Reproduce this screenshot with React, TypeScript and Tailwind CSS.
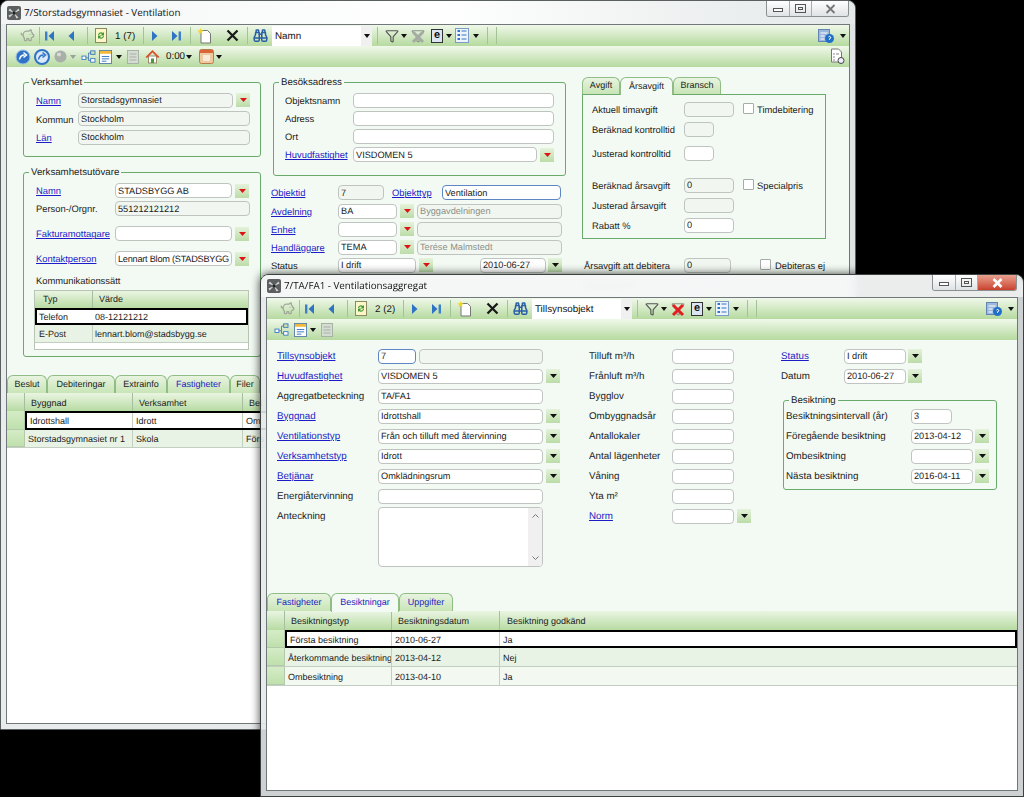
import React from "react";
import { PiggyBank, Binoculars, Funnel } from "lucide-react";

const BODY = "bg-[#f3faf3]";

// ---- icons ----
const Nav = ({ dir, bar }: { dir: "l" | "r"; bar?: boolean }) => (
  <svg width="12" height="12" viewBox="0 0 12 12">
    {dir === "l" ? (
      <>
        {bar && <rect x="1" y="1.5" width="2.4" height="9" fill="#3d7fc8" />}
        <polygon points={bar ? "10,1 4.5,6 10,11" : "9,1 3.5,6 9,11"} fill="#2f74c4" />
      </>
    ) : (
      <>
        <polygon points={bar ? "2,1 7.5,6 2,11" : "3,1 8.5,6 3,11"} fill="#2f74c4" />
        {bar && <rect x="8.6" y="1.5" width="2.4" height="9" fill="#3d7fc8" />}
      </>
    )}
  </svg>
);
const Caret = ({ c = "#111", className = "" }: { c?: string; className?: string }) => (
  <svg width="6" height="4" viewBox="0 0 6 4" className={"shrink-0 " + className}>
    <polygon points="0,0 6,0 3,4" fill={c} />
  </svg>
);
const RefreshDoc = () => (
  <svg width="14" height="15" viewBox="0 0 14 15">
    <rect x="1.5" y="0.5" width="11" height="14" fill="#fdf6c8" stroke="#8a8a60" />
    <path d="M4 7a3 3 0 0 1 5-2l1-1v3.400H6.600L8 6a2 2 0 0 0-3 1z" fill="#3f9a35" />
    <path d="M10 8a3 3 0 0 1-5 2l-1 1V7.600h3.400L6 9a2 2 0 0 0 3-1z" fill="#3f9a35" />
  </svg>
);
const NewDoc = () => (
  <svg width="15" height="16" viewBox="0 0 15 16">
    <path d="M4 2.500h6.500l3 3v9.500H4z" fill="#fff" stroke="#777" />
    <path d="M3.500 0l.9 2.200 2.300.3-1.800 1.500.6 2.300-2-1.300-2 1.300.6-2.300L.3 2.500l2.300-.3z" fill="#f4d52e" />
  </svg>
);
const BigX = () => (
  <svg width="13" height="13" viewBox="0 0 13 13">
    <path d="M1.500 1.500l10 10M11.500 1.500l-10 10" stroke="#1a1a1a" strokeWidth="2.300" />
  </svg>
);
const EBox = () => (
  <span className="flex h-[14px] w-[12px] items-center justify-center border-[1.5px] border-[#333] bg-[#dbe6f2] text-[11px] leading-none font-bold text-[#111]">e</span>
);
const ListIcon = () => (
  <svg width="14" height="15" viewBox="0 0 14 15">
    <rect x="0.500" y="0.500" width="13" height="14" fill="#eef4fb" stroke="#7c9cc4" />
    {[3, 7, 11].map((y) => (
      <g key={y}>
        <rect x="2.500" y={y - 1} width="2.500" height="2" fill="#2f74c4" />
        <rect x="6.500" y={y - 0.5} width="5" height="1" fill="#2f74c4" />
      </g>
    ))}
  </svg>
);
const HelpDoc = () => (
  <svg width="17" height="16" viewBox="0 0 17 16">
    <rect x="0.500" y="1.500" width="11" height="12" fill="#9cb8dc" stroke="#6285b4" />
    <path d="M2.500 5h7M2.500 8h4M2.500 11h4" stroke="#fff" />
    <circle cx="11.500" cy="10.500" r="4.500" fill="#1f6fc8" />
    <path d="M10.500 9a1.200 1.200 0 1 1 1 1.800v1" stroke="#fff" fill="none" />
  </svg>
);
const DocLens = () => (
  <svg width="16" height="17" viewBox="0 0 16 17">
    <path d="M1.500 1h7l3 3v10h-10z" fill="#fff" stroke="#777" />
    <path d="M3 6h2M6 6h3M3 9h2M3 12h2" stroke="#888" />
    <circle cx="11" cy="12.500" r="3" fill="#eef" stroke="#444" />
  </svg>
);
const Circ = ({ second }: { second?: boolean }) => (
  <svg width="16" height="16" viewBox="0 0 16 16">
    <circle cx="8" cy="8" r="7" fill={second ? "#dbe9f8" : "#2f74c4"} stroke={second ? "#2f74c4" : "#9cc0ea"} strokeWidth={second ? 2 : 1} />
    <path d="M4.500 10.500c.5-3 2.500-4.500 5-4.500M8.500 3.500L11.500 6l-3 2.500" stroke={second ? "#2f74c4" : "#fff"} strokeWidth="1.500" fill="none" />
  </svg>
);
const Ball = () => (
  <svg width="13" height="13" viewBox="0 0 13 13">
    <circle cx="6.500" cy="6.500" r="6" fill="#a9afa9" />
    <circle cx="5" cy="4.500" r="2" fill="#d8dcd8" />
  </svg>
);
const Net = () => (
  <svg width="15" height="13" viewBox="0 0 16 15">
    <path d="M5 9h3V3.500h3M8 9v3h3" stroke="#4a78b0" fill="none" />
    <rect x="0.500" y="7" width="4.500" height="4" fill="#fff" stroke="#2f74c4" />
    <rect x="10.500" y="1" width="5" height="4" fill="#cfe3a8" stroke="#2f74c4" />
    <rect x="10.500" y="10" width="5" height="4" fill="#fff" stroke="#2f74c4" />
  </svg>
);
const Form = () => (
  <svg width="13" height="14" viewBox="0 0 14 15">
    <rect x="0.500" y="0.500" width="13" height="14" fill="#fff" stroke="#5a7ea8" />
    <rect x="1" y="1" width="12" height="3" fill="#f0b93a" />
    <path d="M3 7h8M3 9.500h8M3 12h5" stroke="#2f74c4" />
  </svg>
);
const GrayDoc = () => (
  <svg width="12" height="14" viewBox="0 0 12 14">
    <rect x="0.500" y="0.500" width="11" height="13" fill="#d5dcd2" stroke="#a9b2a6" />
    <path d="M2.500 4h7M2.500 7h7M2.500 10h7" stroke="#a9b2a6" />
  </svg>
);
const Home = () => (
  <svg width="15" height="15" viewBox="0 0 15 15">
    <rect x="3.500" y="7" width="8" height="7" fill="#fff" stroke="#9a8a70" />
    <rect x="6" y="9.500" width="3" height="4.500" fill="#4a9a3a" />
    <path d="M0.500 8L7.500 1l7 7-1.500 1-5.500-5.500L2 9z" fill="#d8502c" />
  </svg>
);
const Cal = () => (
  <svg width="15" height="15" viewBox="0 0 15 15">
    <rect x="0.500" y="0.500" width="14" height="14" rx="2" fill="#eec9a0" stroke="#b97a4a" />
    <rect x="1" y="1" width="13" height="3" fill="#d9643a" />
    <rect x="4" y="6" width="7" height="6" fill="#f8ead8" />
  </svg>
);
const Filter = ({ c = "#555" }: { c?: string }) => <Funnel size={14} color={c} strokeWidth={2} />;
const ClearFilter = ({ red }: { red?: boolean }) => (
  <span className="relative flex">
    <Funnel size={14} color="#8c948c" strokeWidth={2} />
    <svg width="14" height="14" viewBox="0 0 14 14" className="absolute top-[1px] left-0">
      <path d="M2 2l10 10M12 2L2 12" stroke={red ? "#e02020" : "#a4aca4"} strokeWidth="3" />
    </svg>
  </span>
);

// ---- toolbar bits ----
const Sep = ({ className = "" }: { className?: string }) => <span className={"h-[17px] w-px shrink-0 bg-[#a3c295] " + className} />;
const Slot = ({ className = "", children }: { className?: string; children: React.ReactNode }) => (
  <span className={"flex h-full w-[18px] shrink-0 items-center justify-center " + className}>{children}</span>
);
const BAR = "flex h-[21px] items-center bg-gradient-to-b from-[#f0f8ea] to-[#b6da9f] text-[9.800px] text-[#111]";

const MainToolbar = ({ pos, search, red }: { pos: string; search: string; red?: boolean }) => (
  <div className={BAR}>
    <Slot className="ml-[11px]"><PiggyBank size={15} color="#a0a898" /></Slot>
    <Sep className="ml-[3px]" />
    <Slot className="ml-px"><Nav dir="l" bar /></Slot>
    <Slot className="ml-[3px]"><Nav dir="l" /></Slot>
    <Sep className="ml-[7px]" />
    <Slot className="ml-[4px]"><RefreshDoc /></Slot>
    <span className="ml-[5px] w-[20px] shrink-0 whitespace-nowrap pt-[3px]">{pos}</span>
    <Sep className="ml-[8px]" />
    <Slot className="ml-[2px]"><Nav dir="r" /></Slot>
    <Slot className="ml-[3px]"><Nav dir="r" bar /></Slot>
    <Sep className="ml-[5px]" />
    <Slot className="ml-[4px]"><NewDoc /></Slot>
    <Slot className="ml-[10px]"><BigX /></Slot>
    <Sep className="ml-[6px]" />
    <Slot className="ml-[3px]"><Binoculars size={15} color="#2a5fa8" strokeWidth={2.4} /></Slot>
    <div className="ml-[3px] flex h-[20px] w-[100px] shrink-0 items-center bg-white pl-[3px]">
      <span className="pt-[3px]">{search}</span>
      <span className="ml-auto flex h-full w-[11px] items-center justify-center bg-[#f0f0f0]"><Caret /></span>
    </div>
    <Sep className="ml-[5px]" />
    <Slot className="ml-[5px]"><Filter /></Slot>
    <Caret />
    <Slot className="ml-[2px]"><ClearFilter red={red} /></Slot>
    <Slot className="ml-px"><EBox /></Slot>
    <Caret />
    <Slot className="ml-px"><ListIcon /></Slot>
    <Caret className="ml-[2px]" />
    <Sep className="ml-[8px]" />
    <Sep className="ml-[8px]" />
    <Slot className="ml-auto"><HelpDoc /></Slot>
    <Caret className="mr-[3px] ml-[5px]" />
  </div>
);

// ---- form bits ----
const Link = ({ w, children }: { w: string; children: React.ReactNode }) => (
  <span className={"shrink-0 whitespace-nowrap pt-[2px] text-[#1c1cc8] underline " + w}>{children}</span>
);
const Lbl = ({ w, children }: { w: string; children: React.ReactNode }) => (
  <span className={"shrink-0 whitespace-nowrap pt-[2px] " + w}>{children}</span>
);
const Fld = ({ w, v, ro, focus, gray, h = "h-[15px]" }: { w: string; v?: string; ro?: boolean; focus?: boolean; gray?: boolean; h?: string }) => (
  <div
    className={
      "flex shrink-0 items-center overflow-hidden whitespace-nowrap rounded-[4px] border-[1.5px] pt-[2px] pl-[2px] text-[9.200px] " +
      `${h} ${w} ` +
      (focus ? "border-[#5f86c4] " : "border-[#c0c4c0] ") +
      (ro ? "bg-[#f1f7f0] " : "bg-white ") +
      (gray ? "text-[#8a8f8a]" : "text-[#1a1a1a]")
    }
  >
    {v}
  </div>
);
const Drop = ({ red, className = "ml-[3px]" }: { red?: boolean; className?: string }) => (
  <span className={"flex h-[14px] w-[14px] shrink-0 items-center justify-center bg-gradient-to-b from-[#e4f2da] to-[#bcdca8] " + className}>
    <svg width="7" height="4" viewBox="0 0 7 4" className="shrink-0">
      <polygon points="0,0 7,0 3.500,4" fill={red ? "#dd1414" : "#111"} />
    </svg>
  </span>
);
const Row = ({ h = "h-[18px]", className = "", children }: { h?: string; className?: string; children: React.ReactNode }) => (
  <div className={"flex items-center " + h + " " + className}>{children}</div>
);
const Group = ({ title, className, pad, children }: { title: string; className: string; pad: string; children: React.ReactNode }) => (
  <fieldset className={"rounded-[3px] border border-[#6aaa6a] " + className}>
    <legend className="ml-[5px] h-[12px] px-[2px] text-[9.700px] leading-[13px]">{title}</legend>
    <div className={pad}>{children}</div>
  </fieldset>
);
const Check = () => <span className="h-[11px] w-[11px] shrink-0 rounded-[1px] border border-[#a8aca8] bg-white" />;

const Tab = ({ w, active, blue, children }: { w: string; active?: boolean; blue?: boolean; children: React.ReactNode }) => (
  <div
    className={
      "flex shrink-0 items-center justify-center rounded-t-[6px] border border-b-0 border-[#8fbd85] text-[9px] " +
      `${w} ` +
      (active ? "relative z-10 -mb-px bg-[#f3faf3] " : "bg-gradient-to-b from-[#e8f4e0] to-[#c8e5b6] ") +
      (blue ? "text-[#2222c0]" : "text-[#222]")
    }
  >
    {children}
  </div>
);

const HCell = ({ w, children }: { w: string; children?: React.ReactNode }) => (
  <div className={"flex h-full shrink-0 items-center overflow-hidden whitespace-nowrap border-r border-[#a6bda0] bg-gradient-to-b from-[#eaf5e2] to-[#b7dba2] pt-[3px] pl-[6px] text-[9px] " + w}>{children}</div>
);
const Cell = ({ w, children }: { w: string; children?: React.ReactNode }) => (
  <div className={"flex h-full shrink-0 items-center overflow-hidden whitespace-nowrap border-r border-[#c2cfc0] pt-[3px] pl-[3px] text-[9px] " + w}>{children}</div>
);
const LastCell = ({ children }: { children: React.ReactNode }) => <div className="flex items-center pt-[3px] pl-[3px] text-[9px]">{children}</div>;
const Ind = ({ w }: { w: string }) => <div className={"h-full shrink-0 border-r border-b border-[#b4c8ac] bg-gradient-to-b from-[#d4ecc6] to-[#bfe0ac] " + w} />;

const WinIcon = () => (
  <svg width="14" height="14" viewBox="0 0 14 14" className="shrink-0">
    <rect width="14" height="14" rx="2" fill="#5c5f5f" />
    <path d="M7 7L3 2.500 1.500 4.500zM7 7l4.500-4.500 1 2zM7 7l4.500 4.500-2 1zM7 7l-4.500 4.500-1-2z" fill="#d4d8d8" />
    <circle cx="7" cy="7" r="1.500" fill="#222" />
  </svg>
);
const Controls = ({ w, red }: { w: string; red?: boolean }) => (
  <div className={"mr-[6px] ml-auto flex h-[16px] overflow-hidden rounded-b-[3px] border border-t-0 border-[#8a8f90] text-[#555] " + w}>
    <div className="flex w-[23px] items-center justify-center border-r border-[#a8acac] bg-gradient-to-b from-white to-[#dfe3e5]">
      <span className="mt-[3px] h-[4px] w-[10px] border border-[#555] bg-white" />
    </div>
    <div className="flex w-[22px] items-center justify-center border-r border-[#a8acac] bg-gradient-to-b from-white to-[#dfe3e5]">
      <span className="flex h-[9px] w-[11px] items-center justify-center border border-[#555]"><span className="h-[3px] w-[5px] border border-[#555]" /></span>
    </div>
    <div className={"flex flex-1 items-center justify-center " + (red ? "bg-gradient-to-b from-[#e8a090] to-[#c8402c]" : "bg-gradient-to-b from-white to-[#dfe3e5]")}>
      <svg width="11" height="10" viewBox="0 0 11 10">
        <path d="M1.500 1l8 8M9.500 1l-8 8" stroke={red ? "#fff" : "#777"} strokeWidth={red ? 2.600 : 1.800} />
      </svg>
    </div>
  </div>
);

// ---- first window pieces ----
const Verksamhet = () => (
  <Group title="Verksamhet" className="h-[81px] w-[238px]" pad="pt-[3px] pl-[12px]">
    <Row h="h-[18.500px]"><Link w="w-[42px]">Namn</Link><Fld w="w-[155px]" v="Storstadsgymnasiet" ro /><Drop red /></Row>
    <Row h="h-[18.500px]"><Lbl w="w-[42px]">Kommun</Lbl><Fld w="w-[172px]" v="Stockholm" ro /></Row>
    <Row h="h-[18.500px]"><Link w="w-[42px]">Län</Link><Fld w="w-[172px]" v="Stockholm" ro /></Row>
  </Group>
);

const Utovare = () => (
  <Group title="Verksamhetsutövare" className="mt-[9px] h-[191px] w-[238px]" pad="pt-[3.500px] pl-[12px]">
    <Row><Link w="w-[79px]">Namn</Link><Fld w="w-[117px]" v="STADSBYGG AB" /><Drop red /></Row>
    <Row><Lbl w="w-[79px]">Person-/Orgnr.</Lbl><Fld w="w-[135px]" v="551212121212" ro /></Row>
    <Row className="mt-[7px]"><Link w="w-[79px]">Fakturamottagare</Link><Fld w="w-[117px]" /><Drop red /></Row>
    <Row className="mt-[7px]"><Link w="w-[79px]">Kontaktperson</Link><Fld w="w-[117px] tracking-[-0.25px]" v="Lennart Blom (STADSBYGG" /><Drop red /></Row>
    <Row className="mt-[3.500px]"><Lbl w="w-[100px]">Kommunikationssätt</Lbl></Row>
    <div className="mt-px -ml-[2px] h-[60px] w-[215px] border border-[#b8c4b4] bg-white text-[9px]">
      <div className="flex h-[17px]">
        <div className="w-[58px] border-r border-[#a6bda0] bg-gradient-to-b from-[#eaf5e2] to-[#b7dba2] pl-[8px] leading-[17px]">Typ</div>
        <div className="flex-1 bg-gradient-to-b from-[#eaf5e2] to-[#b7dba2] pl-[6px] leading-[17px]">Värde</div>
      </div>
      <div className="flex h-[17px] items-center border-2 border-black bg-white pt-[2px]">
        <div className="w-[56px] pl-[2px]">Telefon</div>
        <div className="pl-[2px]">08-12121212</div>
      </div>
      <div className="flex h-[18px] items-center border-b border-[#c2cfc0] bg-[#e8f3e6]">
        <div className="h-full w-[58px] border-r border-[#c2cfc0] pl-[4px] leading-[19px]">E-Post</div>
        <div className="pt-[2px] pl-[2px]">lennart.blom@stadsbygg.se</div>
      </div>
    </div>
  </Group>
);

const Middle = () => (
  <div className="ml-[12px] w-[293px] shrink-0 pt-[9px]">
    <Group title="Besöksadress" className="h-[100px] w-[293px]" pad="pt-[3px] pl-[11px]">
      <Row><Lbl w="w-[68px]">Objektsnamn</Lbl><Fld w="w-[201px]" /></Row>
      <Row><Lbl w="w-[68px]">Adress</Lbl><Fld w="w-[201px]" /></Row>
      <Row><Lbl w="w-[68px]">Ort</Lbl><Fld w="w-[201px]" /></Row>
      <Row h="h-[19px]"><Link w="w-[68px]">Huvudfastighet</Link><Fld w="w-[184px]" v="VISDOMEN 5" /><Drop red /></Row>
    </Group>
    <div className="-ml-[2px] pt-[7px]">
      <Row h="h-[19px]"><Link w="w-[67px]">Objektid</Link><Fld w="w-[46px]" v="7" ro /><span className="w-[8px]" /><Link w="w-[50px]">Objekttyp</Link><Fld w="w-[119px]" v="Ventilation" focus /></Row>
      <Row><Link w="w-[67px]">Avdelning</Link><Fld w="w-[59px]" v="BA" /><Drop red /><Fld w="w-[145px] ml-[3px]" v="Byggavdelningen" ro gray /></Row>
      <Row><Link w="w-[67px]">Enhet</Link><Fld w="w-[59px]" /><Drop red /><Fld w="w-[145px] ml-[3px]" ro /></Row>
      <Row><Link w="w-[67px]">Handläggare</Link><Fld w="w-[59px]" v="TEMA" /><Drop red /><Fld w="w-[145px] ml-[3px]" v="Terése Malmstedt" ro gray /></Row>
      <Row><Lbl w="w-[67px]">Status</Lbl><Fld w="w-[78px]" v="I drift" /><Drop red /><Fld w="w-[66px] ml-[47px]" v="2010-06-27" /><Drop className="ml-[2px]" /></Row>
    </div>
  </div>
);

const Right = () => (
  <div className="ml-[16px] w-[244px] shrink-0 pt-[9px]">
    <div className="flex h-[18px] items-end">
      <Tab w="w-[38px] h-[17px]">Avgift</Tab>
      <Tab w="w-[53px] h-[18px]" active>Årsavgift</Tab>
      <Tab w="w-[48px] h-[17px]">Bransch</Tab>
    </div>
    <div className="h-[145px] border border-[#6aaa6a] pt-[5px] pl-[9px]">
      <Row><Lbl w="w-[92px]">Aktuell timavgift</Lbl><Fld w="w-[50px]" ro /><span className="ml-[9px] flex items-center gap-[3px]"><Check /><span className="pt-[2px]">Timdebitering</span></span></Row>
      <Row h="h-[23px]"><Lbl w="w-[92px]">Beräknad kontrolltid</Lbl><Fld w="w-[30px]" ro /></Row>
      <Row h="h-[25px]"><Lbl w="w-[92px]">Justerad kontrolltid</Lbl><Fld w="w-[30px]" /></Row>
      <Row h="h-[20px]" className="mt-[9px]"><Lbl w="w-[92px]">Beräknad årsavgift</Lbl><Fld w="w-[50px]" v="0" ro /><span className="ml-[9px] flex items-center gap-[3px]"><Check /><span className="pt-[2px]">Specialpris</span></span></Row>
      <Row h="h-[20px]"><Lbl w="w-[92px]">Justerad årsavgift</Lbl><Fld w="w-[50px]" ro /></Row>
      <Row h="h-[20px]"><Lbl w="w-[92px]">Rabatt %</Lbl><Fld w="w-[50px]" v="0" /></Row>
    </div>
    <div className="pt-[17px]">
      <Row><Lbl w="w-[100px] ml-[2px]">Årsavgift att debitera</Lbl><Fld w="w-[47px]" v="0" ro /><span className="ml-[29px] flex items-center gap-[4px]"><Check /><span className="pt-[2px]">Debiteras ej</span></span></Row>
      <Row h="h-[20px]"><Lbl w="w-[100px] ml-[2px]">Debiterad fe</Lbl><Fld w="w-[30px]" /></Row>
    </div>
  </div>
);

// ---- windows ----
const WindowOne = () => (
  <div className="absolute top-0 left-0 flex h-[730px] w-[856px] flex-col rounded-t-[8px] border border-[#5a5f60] bg-gradient-to-r from-[#e9eced] to-[#dfe3e4] text-[9.400px] shadow-[0_0_6px_rgba(0,0,0,0.5)]">
    <div className="flex h-[23px] shrink-0 items-start rounded-t-[8px] bg-gradient-to-r from-[#f2f4f4] via-white to-[#e4e8e8]">
      <div className="mt-[5px] ml-[6px]"><WinIcon /></div>
      <span className="mt-[5px] ml-[3px] font-['Open_Sans',sans-serif] text-[9.800px] text-[#111]">7/Storstadsgymnasiet - Ventilation</span>
      <Controls w="w-[83px]" />
    </div>
    <div className="mx-[5px] mb-[5px] flex min-h-0 flex-1 flex-col overflow-hidden border border-[#70787a] bg-white">
      <MainToolbar pos="1 (7)" search="Namn" />
      <div className={BAR}>
        <Slot className="ml-[7px]"><Circ /></Slot>
        <Slot className="ml-px"><Circ second /></Slot>
        <Slot><Ball /></Slot>
        <Caret c="#9aa29a" className="ml-px" />
        <Slot className="ml-[3px]"><Net /></Slot>
        <Slot className="-ml-px"><Form /></Slot>
        <Caret className="ml-[2px]" />
        <Slot className="ml-[2px]"><GrayDoc /></Slot>
        <Slot className="ml-px"><Home /></Slot>
        <span className="ml-[5px] w-[17px] shrink-0 pt-[2px]">0:00</span>
        <Caret className="ml-[3px]" />
        <Slot className="ml-[5px]"><Cal /></Slot>
        <Caret className="ml-px" />
        <Slot className="mr-[2px] ml-auto"><DocLens /></Slot>
      </div>
      <div className={"flex h-[308px] shrink-0 overflow-hidden pl-[16px] " + BODY}>
        <div className="w-[238px] shrink-0 pt-[9px]">
          <Verksamhet />
          <Utovare />
        </div>
        <Middle />
        <Right />
      </div>
      <div className={"flex h-[18px] shrink-0 items-end " + BODY}>
        <Tab w="w-[40px] h-[18px]">Beslut</Tab>
        <Tab w="w-[68px] h-[18px]">Debiteringar</Tab>
        <Tab w="w-[52px] h-[18px]">Extrainfo</Tab>
        <Tab w="w-[63px] h-[18px]" blue>Fastigheter</Tab>
        <Tab w="w-[30px] h-[18px]">Filer</Tab>
      </div>
      <div className="flex h-[18px] shrink-0">
        <HCell w="w-[18px]" />
        <HCell w="w-[108px]">Byggnad</HCell>
        <HCell w="w-[110px]">Verksamhet</HCell>
        <HCell w="w-[300px]">Bet</HCell>
      </div>
      <div className="flex h-[19px] shrink-0">
        <Ind w="w-[18px]" />
        <div className="flex flex-1 border-2 border-black">
          <Cell w="w-[106px]">Idrottshall</Cell>
          <Cell w="w-[110px]">Idrott</Cell>
          <Cell w="w-[300px]">Om</Cell>
        </div>
      </div>
      <div className="flex h-[18px] shrink-0 border-b border-[#c2cfc0] bg-[#e8f3e6]">
        <Ind w="w-[18px]" />
        <Cell w="w-[108px]">Storstadsgymnasiet nr 1</Cell>
        <Cell w="w-[110px]">Skola</Cell>
        <Cell w="w-[300px]">Förs</Cell>
      </div>
    </div>
  </div>
);

const F1 = "h-[20px]";
const LW = "w-[101px]";
const MW = "w-[83px]";

const WindowTwo = () => (
  <div className="absolute top-[274px] left-[260px] flex h-[523px] w-[764px] flex-col rounded-t-[8px] border border-[#3c4142] bg-[#e4e8e9]/90 text-[9.800px] shadow-[0_0_10px_rgba(0,0,0,0.75)]">
    <div className="flex h-[22px] shrink-0 items-start rounded-t-[8px] bg-white/60 backdrop-blur-[3px]">
      <div className="mt-[4px] ml-[6px]"><WinIcon /></div>
      <span className="mt-[4px] ml-[3px] font-['Open_Sans',sans-serif] text-[9.800px] text-[#111]">7/TA/FA1 - Ventilationsaggregat</span>
      <Controls w="w-[85px]" red />
    </div>
    <div className="mx-[5px] mb-[5px] flex min-h-0 flex-1 flex-col overflow-hidden border border-[#70787a] bg-white">
      <MainToolbar pos="2 (2)" search="Tillsynsobjekt" red />
      <div className={BAR}>
        <Slot className="ml-[5px]"><Net /></Slot>
        <Slot className="ml-px"><Form /></Slot>
        <Caret className="ml-px" />
        <Slot className="ml-[2px]"><GrayDoc /></Slot>
      </div>
      <div className={"flex h-[252px] shrink-0 pt-[6px] pl-[10px] " + BODY}>
        <div className="w-[284px] shrink-0">
          <Row h={F1}><Link w={LW}>Tillsynsobjekt</Link><Fld w="w-[38px]" v="7" focus /><Fld w="w-[124px] ml-[3px]" ro /></Row>
          <Row h={F1}><Link w={LW}>Huvudfastighet</Link><Fld w="w-[165px]" v="VISDOMEN 5" /><Drop /></Row>
          <Row h={F1}><Lbl w={LW}>Aggregatbeteckning</Lbl><Fld w="w-[165px]" v="TA/FA1" /></Row>
          <Row h={F1}><Link w={LW}>Byggnad</Link><Fld w="w-[165px]" v="Idrottshall" /><Drop /></Row>
          <Row h={F1}><Link w={LW}>Ventilationstyp</Link><Fld w="w-[165px]" v="Från och tilluft med återvinning" /><Drop /></Row>
          <Row h={F1}><Link w={LW}>Verksamhetstyp</Link><Fld w="w-[165px]" v="Idrott" /><Drop /></Row>
          <Row h={F1}><Link w={LW}>Betjänar</Link><Fld w="w-[165px]" v="Omklädningsrum" /><Drop /></Row>
          <Row h={F1}><Lbl w={LW}>Energiåtervinning</Lbl><Fld w="w-[165px]" /></Row>
          <div className="mt-px flex items-start">
            <Lbl w={LW + " leading-[16px]"}>Anteckning</Lbl>
            <div className="flex h-[60px] w-[165px] justify-end overflow-hidden rounded-[4px] border-[1.5px] border-[#c0c4c0] bg-white">
              <div className="flex w-[14px] flex-col items-center justify-between bg-[#f0f0f0] py-[6px]">
                <svg width="7" height="4" viewBox="0 0 7 4"><path d="M0.500 3.500l3-3 3 3" stroke="#777" fill="none" /></svg>
                <svg width="7" height="4" viewBox="0 0 7 4"><path d="M0.500 0.500l3 3 3-3" stroke="#777" fill="none" /></svg>
              </div>
            </div>
          </div>
        </div>
        <div className="ml-[28px] w-[192px] shrink-0">
          <Row h={F1}><Lbl w={MW}>Tilluft m³/h</Lbl><Fld w="w-[62px]" /></Row>
          <Row h={F1}><Lbl w={MW}>Frånluft m³/h</Lbl><Fld w="w-[62px]" /></Row>
          <Row h={F1}><Lbl w={MW}>Bygglov</Lbl><Fld w="w-[62px]" /></Row>
          <Row h={F1}><Lbl w={MW}>Ombyggnadsår</Lbl><Fld w="w-[62px]" /></Row>
          <Row h={F1}><Lbl w={MW}>Antallokaler</Lbl><Fld w="w-[62px]" /></Row>
          <Row h={F1}><Lbl w={MW}>Antal lägenheter</Lbl><Fld w="w-[62px]" /></Row>
          <Row h={F1}><Lbl w={MW}>Våning</Lbl><Fld w="w-[62px]" /></Row>
          <Row h={F1}><Lbl w={MW}>Yta m²</Lbl><Fld w="w-[62px]" /></Row>
          <Row h={F1}><Link w={MW}>Norm</Link><Fld w="w-[62px]" /><Drop /></Row>
        </div>
        <div className="w-[220px] shrink-0">
          <Row h={F1}><Link w="w-[63px]">Status</Link><Fld w="w-[62px]" v="I drift" /><Drop className="ml-[2px]" /></Row>
          <Row h={F1}><Lbl w="w-[63px]">Datum</Lbl><Fld w="w-[62px]" v="2010-06-27" /><Drop className="ml-[2px]" /></Row>
          <Group title="Besiktning" className="mt-[8px] ml-[2px] h-[96px] w-[214px]" pad="pl-[2px]">
            <Row h={F1}><Lbl w="w-[125px]">Besiktningsintervall (år)</Lbl><Fld w="w-[41px]" v="3" /></Row>
            <Row h={F1}><Lbl w="w-[125px]">Föregående besiktning</Lbl><Fld w="w-[62px]" v="2013-04-12" /><Drop className="ml-[2px]" /></Row>
            <Row h={F1}><Lbl w="w-[125px]">Ombesiktning</Lbl><Fld w="w-[62px]" /><Drop className="ml-[2px]" /></Row>
            <Row h={F1}><Lbl w="w-[125px]">Nästa besiktning</Lbl><Fld w="w-[62px]" v="2016-04-11" /><Drop className="ml-[2px]" /></Row>
          </Group>
        </div>
      </div>
      <div className={"flex h-[19px] shrink-0 items-end " + BODY}>
        <Tab w="w-[64px] h-[18px]" blue>Fastigheter</Tab>
        <Tab w="w-[68px] h-[19px]" active blue>Besiktningar</Tab>
        <Tab w="w-[54px] h-[18px]" blue>Uppgifter</Tab>
      </div>
      <div className="flex h-[19px] shrink-0">
        <HCell w="w-[18px]" />
        <HCell w="w-[107px]">Besiktningstyp</HCell>
        <HCell w="w-[108px]">Besiktningsdatum</HCell>
        <div className="flex h-full flex-1 items-center bg-gradient-to-b from-[#eaf5e2] to-[#b7dba2] pt-[3px] pl-[7px] text-[9px]">Besiktning godkänd</div>
      </div>
      <div className="flex h-[18px] shrink-0">
        <Ind w="w-[18px]" />
        <div className="flex flex-1 border-2 border-black">
          <Cell w="w-[105px]">Första besiktning</Cell>
          <Cell w="w-[108px]">2010-06-27</Cell>
          <LastCell>Ja</LastCell>
        </div>
      </div>
      <div className="flex h-[19px] shrink-0 border-b border-[#c2cfc0] bg-[#e8f3e6]">
        <Ind w="w-[18px]" />
        <Cell w="w-[107px]">Återkommande besiktning</Cell>
        <Cell w="w-[108px]">2013-04-12</Cell>
        <LastCell>Nej</LastCell>
      </div>
      <div className="flex h-[19px] shrink-0 border-b border-[#c2cfc0] bg-[#f3f8f1]">
        <Ind w="w-[18px]" />
        <Cell w="w-[107px]">Ombesiktning</Cell>
        <Cell w="w-[108px]">2013-04-10</Cell>
        <LastCell>Ja</LastCell>
      </div>
    </div>
  </div>
);

export default function App() {
  return (
    <div className="relative h-[797px] w-[1024px] overflow-hidden bg-black font-['Liberation_Sans',Arial,sans-serif] text-[#222] [text-rendering:geometricPrecision]">
      <WindowOne />
      <WindowTwo />
    </div>
  );
}
